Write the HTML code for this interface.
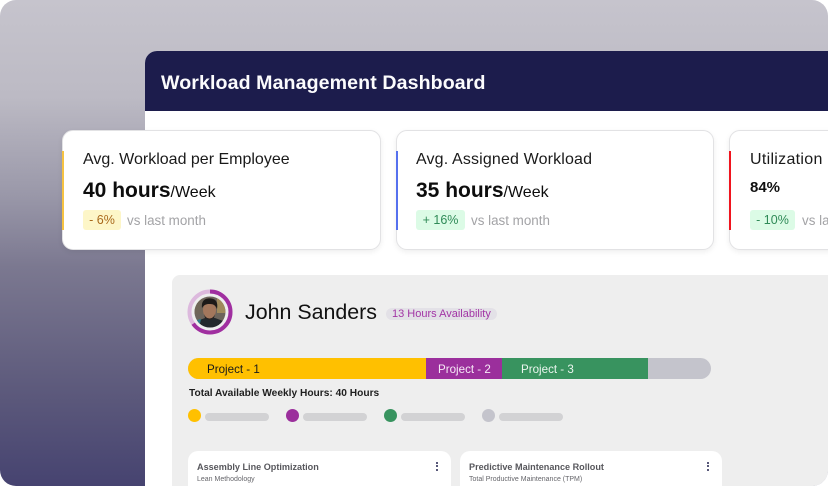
<!DOCTYPE html>
<html><head><meta charset="utf-8"><style>
*{box-sizing:border-box;margin:0;padding:0}
html,body{width:828px;height:486px;background:#fff;overflow:hidden;font-family:"Liberation Sans",sans-serif}
.a{position:absolute}
#root{position:absolute;left:0;top:0;width:828px;height:486px;border-radius:16px;overflow:hidden;background:linear-gradient(180deg,#c6c4cd 0%,#bcbac4 20%,#9a98a9 40%,#7b7890 55%,#5d5a7c 80%,#464370 100%)}
.card{position:absolute;top:130px;height:120px;background:#fff;border:1px solid #e2e2e4;border-radius:11px;box-shadow:0 2px 6px rgba(0,0,0,.07)}
.t{position:absolute;font-size:16px;color:#1a1a1a;line-height:20px;white-space:nowrap}
.pill{position:absolute;top:210px;height:20px;border-radius:3px;font-size:12.5px;line-height:21px;text-align:center;white-space:nowrap}
.vs{position:absolute;top:211px;font-size:13.4px;line-height:20px;color:#a3a3a6;white-space:nowrap}
.big{position:absolute;top:177px;line-height:27px;font-size:21px;font-weight:bold;color:#0d0d0d;white-space:nowrap}
.big span{font-size:16px;font-weight:normal}
.dot{position:absolute;top:409px;width:13px;height:13px;border-radius:50%}
.ln{position:absolute;top:412.500px;width:64px;height:8px;border-radius:4px;background:#d2d2d4}
.seg{position:absolute;top:359px;height:21px;font-size:11.6px;line-height:21px;white-space:nowrap}
.sc{position:absolute;top:451px;height:40px;background:#fff;border-radius:10px 10px 0 0}
.h{position:absolute;top:461px;font-size:9.1px;line-height:13px;font-weight:bold;color:#57575c;white-space:nowrap}
.s{position:absolute;top:475px;font-size:7px;line-height:10px;color:#66666b;white-space:nowrap}
.k{position:absolute;width:2px;height:2px;border-radius:50%;background:#23234f}
</style></head><body>
<div id="root">
<div class="a" style="left:145px;top:51px;width:700px;height:460px;background:#fff;border-radius:12px 0 0 0"></div>
<div class="a" style="left:145px;top:51px;width:700px;height:60px;background:#1c1c4c;border-radius:12px 0 0 0"></div>
<div class="a" style="left:161px;top:69.500px;font-size:19.6px;line-height:26px;font-weight:bold;color:#fbfbfd;white-space:nowrap;letter-spacing:.09px">Workload Management Dashboard</div>

<div class="a" style="left:172px;top:275px;width:680px;height:230px;background:#eee;border-radius:8px"></div>

<div class="card" style="left:62px;width:319px"></div>
<div class="a" style="left:62px;top:151px;width:2px;height:79px;background:#f5c242"></div>
<div class="t" style="left:83px;top:150px;letter-spacing:0">Avg. Workload per Employee</div>
<div class="big" style="left:83px">40 hours<span>/Week</span></div>
<div class="pill" style="left:83px;width:38px;background:#fdf6c8;color:#a9691c">- 6%</div>
<div class="vs" style="left:127px">vs last month</div>

<div class="card" style="left:396px;width:318px"></div>
<div class="a" style="left:396px;top:151px;width:2px;height:79px;background:#5570ee"></div>
<div class="t" style="left:416px;top:150px;letter-spacing:.15px">Avg. Assigned Workload</div>
<div class="big" style="left:416px">35 hours<span>/Week</span></div>
<div class="pill" style="left:416px;width:49px;background:#dcfbe6;color:#2f8a57">+ 16%</div>
<div class="vs" style="left:471px">vs last month</div>

<div class="card" style="left:729px;width:140px"></div>
<div class="a" style="left:729px;top:151px;width:2px;height:79px;background:#f0141e"></div>
<div class="t" style="left:750px;top:150px;letter-spacing:.3px">Utilization</div>
<div class="a" style="left:750px;top:178px;font-size:15px;line-height:20px;font-weight:bold;color:#111;white-space:nowrap">84%</div>
<div class="pill" style="left:750px;width:45px;background:#dcfbe6;color:#2f8a57">- 10%</div>
<div class="vs" style="left:802px">vs last month</div>

<svg class="a" style="left:187px;top:289px" width="46" height="46" viewBox="0 0 46 46">
<circle cx="23" cy="23" r="20.5" fill="none" stroke="#dcb9dd" stroke-width="4"/>
<circle cx="23" cy="23" r="20.5" fill="none" stroke="#a02fa0" stroke-width="4" stroke-dasharray="84 129" transform="rotate(-90 23 23)"/>
<circle cx="23" cy="23" r="15.500" fill="#6d655c"/>
<clipPath id="c"><circle cx="23" cy="23" r="15.500"/></clipPath>
<g clip-path="url(#c)">
<rect x="7" y="7" width="9" height="18" fill="#6f6558"/>
<rect x="30" y="8" width="9" height="16" fill="#a08a5c"/>
<path d="M7 39 L10 32 L18 29 L28 29 L36 32 L39 39 Z" fill="#23282c"/>
<path d="M8 39 L10 31 L14 30 L12 39 Z" fill="#2a7d8c"/>
<ellipse cx="22.500" cy="21" rx="6.500" ry="8.500" fill="#a3775c"/>
<path d="M15 19 C14 10 20 9 24 9.500 C30 10 31 15 30 20 C28 15 25 15 22 15 C19 15 17 16 15 19Z" fill="#1d1a18"/>
<path d="M17 25 C19 31 26 31 28 25 L27 29 L23 31 L18 29Z" fill="#2a2320"/>
</g>
</svg>
<div class="a" style="left:245px;top:298px;font-size:21.400px;line-height:28px;color:#111;white-space:nowrap">John Sanders</div>
<div class="a" style="left:386px;top:308px;width:111px;height:12px;border-radius:6px;background:#e3e1e7"></div>
<div class="a" style="left:392px;top:307px;font-size:11px;line-height:14px;color:#a235a5;white-space:nowrap">13 Hours Availability</div>

<div class="a" style="left:188px;top:358px;width:523px;height:21px;border-radius:11px;overflow:hidden;background:#c4c4cc">
<div class="a" style="left:0;top:0;width:238px;height:21px;background:#ffc000"></div>
<div class="a" style="left:238px;top:0;width:76px;height:21px;background:#9b2f9c"></div>
<div class="a" style="left:314px;top:0;width:146px;height:21px;background:#38935f"></div>
</div>
<div class="seg" style="left:207px;color:#1a1a1a">Project - 1</div>
<div class="seg" style="left:438px;color:#f6e9f6">Project - 2</div>
<div class="seg" style="left:521px;color:#eaf5ee">Project - 3</div>
<div class="a" style="left:189px;top:387px;font-size:10.200px;line-height:13px;font-weight:bold;color:#1f1f1f;white-space:nowrap">Total Available Weekly Hours: 40 Hours</div>

<div class="dot" style="left:188px;background:#ffc000"></div><div class="ln" style="left:204.500px"></div>
<div class="dot" style="left:286px;background:#9b2f9c"></div><div class="ln" style="left:302.500px"></div>
<div class="dot" style="left:384px;background:#38935f"></div><div class="ln" style="left:400.500px"></div>
<div class="dot" style="left:482px;background:#c4c4cc"></div><div class="ln" style="left:498.500px"></div>

<div class="sc" style="left:188px;width:263px"></div>
<div class="h" style="left:197px">Assembly Line Optimization</div>
<div class="s" style="left:197px">Lean Methodology</div>
<div class="k" style="left:436px;top:462px"></div><div class="k" style="left:436px;top:465px"></div><div class="k" style="left:436px;top:469px"></div>

<div class="sc" style="left:460px;width:262px"></div>
<div class="h" style="left:469px">Predictive Maintenance Rollout</div>
<div class="s" style="left:469px">Total Productive Maintenance (TPM)</div>
<div class="k" style="left:707px;top:462px"></div><div class="k" style="left:707px;top:465px"></div><div class="k" style="left:707px;top:469px"></div>
</div>
</body></html>
